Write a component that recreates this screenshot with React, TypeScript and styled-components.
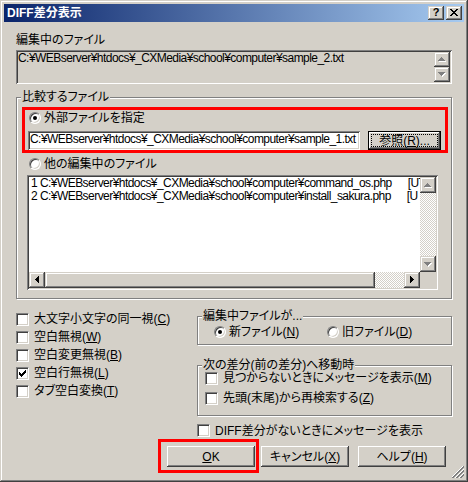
import React from 'react';
import styled, { createGlobalStyle, css } from 'styled-components';

const FACE = '#D4D0C8';
const SHADOW = '#808080';
const DARK = '#404040';
const WHITE = '#FFFFFF';
const RED = '#FF0000';

const GlobalStyle = createGlobalStyle`
  html, body { margin: 0; padding: 0; background: ${FACE}; }
  body {
    font-family: "Liberation Sans", "Noto Sans CJK JP", sans-serif;
    font-size: 12px;
    line-height: 14px;
    color: #000;
    font-feature-settings: "palt";
  }
  *, *::before, *::after { box-sizing: border-box; }
`;

const raisedFrame = css`
  box-shadow:
    inset -1px -1px 0 ${DARK},
    inset 1px 1px 0 ${FACE},
    inset -2px -2px 0 ${SHADOW},
    inset 2px 2px 0 ${WHITE};
`;

const raisedButton = css`
  box-shadow:
    inset -1px -1px 0 ${DARK},
    inset 1px 1px 0 ${WHITE},
    inset -2px -2px 0 ${SHADOW},
    inset 2px 2px 0 ${FACE};
`;

const sunken = css`
  box-shadow:
    inset 1px 1px 0 ${SHADOW},
    inset -1px -1px 0 ${WHITE},
    inset 2px 2px 0 ${DARK},
    inset -2px -2px 0 ${FACE};
`;

const dither = css`
  background-color: ${WHITE};
  background-image: conic-gradient(${FACE} 25%, transparent 0 50%, ${FACE} 0 75%, transparent 0);
  background-size: 2px 2px;
`;

const Window = styled.div`
  position: relative;
  width: 468px;
  height: 482px;
  padding: 4px;
  display: flex;
  flex-direction: column;
  background: ${FACE};
  ${raisedFrame}
`;

const TitleBar = styled.div`
  height: 18px;
  display: flex;
  align-items: center;
  padding: 0 2px;
  background: linear-gradient(to right, #0a246a, #a6caf0);
`;

const TitleText = styled.div`
  flex: 1;
  color: ${WHITE};
  font-weight: bold;
  font-size: 12px;
  line-height: 14px;
  padding-left: 1px;
  white-space: nowrap;
`;

const CaptionButtons = styled.div`
  display: flex;
  gap: 2px;
`;

const CaptionButton = styled.div`
  width: 16px;
  height: 14px;
  background: ${FACE};
  ${raisedFrame}
  display: flex;
  align-items: center;
  justify-content: center;
  font-weight: bold;
  font-size: 11px;
  line-height: 11px;
  padding-bottom: 1px;
`;

const Body = styled.div`
  flex: 1;
  display: flex;
  flex-direction: column;
  padding: 11px 12px 0 12px;
`;

const FieldLabel = styled.div`
  height: 14px;
  line-height: 14px;
  margin-bottom: 3px;
  white-space: nowrap;
`;

const ReadOnlyBox = styled.div`
  height: 34px;
  display: flex;
  padding: 2px;
  background: ${FACE};
  ${sunken}
`;

const PathText = styled.div`
  flex: 1;
  line-height: 13px;
  letter-spacing: -0.55px;
  white-space: nowrap;
  overflow: hidden;
`;

const MiniScroll = styled.div`
  width: 16px;
  display: flex;
  flex-direction: column;
`;

const ScrollButton = styled.div<{ $h?: number }>`
  width: 16px;
  height: ${(p) => p.$h ?? 16}px;
  flex: none;
  background: ${FACE};
  ${raisedFrame}
  display: flex;
  align-items: center;
  justify-content: center;
`;

const GroupBox = styled.div`
  position: relative;
  border: 1px solid ${SHADOW};
  box-shadow: inset 1px 1px 0 ${WHITE}, 1px 1px 0 ${WHITE};
`;

const Legend = styled.span`
  position: absolute;
  top: -7px;
  left: 4px;
  padding: 0 1px;
  background: ${FACE};
  line-height: 12px;
  white-space: nowrap;
`;

const CompareGroup = styled(GroupBox)`
  margin-top: 13px;
  padding: 9px 3px 8px 0;
  display: flex;
  flex-direction: column;
`;

const Highlight = styled.div<{ $pad?: string }>`
  border: 3px solid ${RED};
  padding: ${(p) => p.$pad ?? '0'};
`;

const SourceHighlight = styled(Highlight)`
  margin: 0 0 0 5px;
  display: flex;
  flex-direction: column;
  gap: 5px;
`;

const RadioRow = styled.label<{ $pl?: number; $mt?: number; $w?: number }>`
  display: flex;
  align-items: center;
  gap: 3px;
  height: 16px;
  padding-left: ${(p) => p.$pl ?? 0}px;
  margin-top: ${(p) => p.$mt ?? 0}px;
  width: ${(p) => (p.$w ? `${p.$w}px` : 'auto')};
  flex: none;
  white-space: nowrap;
  line-height: 14px;
`;

const RadioCircle = styled.span<{ $checked?: boolean }>`
  position: relative;
  flex: none;
  width: 12px;
  height: 12px;
  border-radius: 50%;
  background: ${WHITE};
  border: 1px solid;
  border-color: ${SHADOW} ${WHITE} ${WHITE} ${SHADOW};
  box-shadow: inset 1px 1px 0 ${DARK}, inset -1px -1px 0 ${FACE};
  ${(p) =>
    p.$checked &&
    css`
      &::after {
        content: '';
        position: absolute;
        left: 3px;
        top: 3px;
        width: 4px;
        height: 4px;
        border-radius: 50%;
        background: #000;
      }
    `}
`;

const InputRow = styled.div`
  display: flex;
  gap: 8px;
`;

const TextInput = styled.div`
  width: 332px;
  height: 19px;
  padding: 2px;
  background: ${WHITE};
  ${sunken}
  line-height: 13px;
  letter-spacing: -0.55px;
  white-space: nowrap;
  overflow: hidden;
`;

const PushButton = styled.div<{ $w?: number; $h?: number; $default?: boolean }>`
  width: ${(p) => p.$w ?? 88}px;
  height: ${(p) => p.$h ?? 21}px;
  flex: none;
  background: ${FACE};
  display: flex;
  align-items: center;
  justify-content: center;
  white-space: nowrap;
  line-height: 14px;
  ${(p) =>
    p.$default
      ? css`
          padding: 3px;
          box-shadow:
            inset 0 0 0 1px #000,
            inset -2px -2px 0 ${DARK},
            inset 2px 2px 0 ${WHITE},
            inset -3px -3px 0 ${SHADOW};
        `
      : raisedButton}
`;

const FocusRect = styled.span`
  flex: 1;
  align-self: stretch;
  border: 1px dotted #000;
  display: flex;
  align-items: center;
  justify-content: center;
  line-height: 12px;
`;

const ListBox = styled.div`
  margin: 3px 0 0 10px;
  width: 411px;
  height: 115px;
  padding: 2px;
  background: ${WHITE};
  ${sunken}
  display: grid;
  grid-template-columns: 1fr 16px;
  grid-template-rows: 1fr 16px;
`;

const ListContent = styled.div`
  overflow: hidden;
  padding-left: 2px;
`;

const ListRow = styled.div`
  display: flex;
  white-space: nowrap;
  line-height: 13px;
  letter-spacing: -0.55px;
`;

const RowCode = styled.span`
  margin-left: 16px;
`;

const VScroll = styled.div`
  display: flex;
  flex-direction: column;
`;

const HScroll = styled.div`
  display: flex;
`;

const Track = styled.div`
  flex: 1;
  ${dither}
`;

const Thumb = styled.div<{ $w: number }>`
  width: ${(p) => p.$w}px;
  flex: none;
  background: ${FACE};
  ${raisedFrame}
`;

const Corner = styled.div`
  background: ${FACE};
`;

const Lower = styled.div`
  display: flex;
`;

const OptionsColumn = styled.div`
  width: 181px;
  padding-top: 11px;
  display: flex;
  flex-direction: column;
`;

const SideColumn = styled.div`
  width: 255px;
  display: flex;
  flex-direction: column;
`;

const TargetGroup = styled(GroupBox)`
  margin-top: 17px;
  padding: 7px 0 4px 16px;
  display: flex;
`;

const MoveGroup = styled(GroupBox)`
  margin-top: 20px;
  padding: 2px 0 7px 7px;
  display: flex;
  flex-direction: column;
`;

const CheckRow = styled.label<{ $h?: number; $mt?: number }>`
  display: flex;
  align-items: center;
  gap: 5px;
  height: ${(p) => p.$h ?? 18}px;
  margin-top: ${(p) => p.$mt ?? 0}px;
  white-space: nowrap;
  line-height: 12px;
  flex: none;
`;

const CheckBox = styled.span`
  flex: none;
  width: 13px;
  height: 13px;
  background: ${WHITE};
  border: 1px solid;
  border-color: ${SHADOW} ${WHITE} ${WHITE} ${SHADOW};
  box-shadow: inset 1px 1px 0 ${DARK}, inset -1px -1px 0 ${FACE};
  display: flex;
  align-items: center;
  justify-content: center;
`;

const ButtonRow = styled.div`
  display: flex;
  justify-content: flex-end;
  align-items: flex-start;
  padding-right: 6px;
`;

const OkHighlight = styled(Highlight)`
  display: flex;
`;

const SideButton = styled(PushButton)<{ $ml: number }>`
  margin-left: ${(p) => p.$ml}px;
  margin-top: 7px;
`;

const Grip = styled.svg`
  position: absolute;
  right: 4px;
  bottom: 4px;
`;

const Mn = styled.span`
  text-decoration: underline;
  text-underline-offset: 1px;
`;

const ARROWS = {
  up: { w: 7, h: 4, d: 'M3 0h1v1h1v1h1v1h1v1H0V3h1V2h1V1h1z' },
  down: { w: 7, h: 4, d: 'M0 0h7v1H6v1H5v1H4v1H3V3H2V2H1V1H0z' },
  left: { w: 4, h: 7, d: 'M3 0h1v7H3V6H2V5H1V4H0V3h1V2h1V1h1z' },
  right: { w: 4, h: 7, d: 'M0 0h1v1h1v1h1v1h1v1H3v1H2v1H1v1H0z' },
} as const;

function Arrow({ dir, disabled }: { dir: keyof typeof ARROWS; disabled?: boolean }) {
  const a = ARROWS[dir];
  return (
    <svg width={a.w + 1} height={a.h + 1} shapeRendering="crispEdges" style={{ display: 'block' }}>
      {disabled && <path d={a.d} fill={WHITE} transform="translate(1 1)" />}
      <path d={a.d} fill={disabled ? SHADOW : '#000'} />
    </svg>
  );
}

function CheckMark() {
  return (
    <svg width="7" height="7" shapeRendering="crispEdges" style={{ display: 'block' }}>
      <path d="M0 2H1V3H2V4H3V3H4V2H5V1H6V0H7V3H6V4H5V5H4V6H3V7H2V6H1V5H0Z" fill="#000" />
    </svg>
  );
}

function CloseGlyph() {
  return (
    <svg width="8" height="7" shapeRendering="crispEdges" style={{ display: 'block' }}>
      <path
        d="M0 0h2v1H0z M6 0h2v1H6z M1 1h2v1H1z M5 1h2v1H5z M2 2h4v1H2z M3 3h2v1H3z M2 4h4v1H2z M1 5h2v1H1z M5 5h2v1H5z M0 6h2v1H0z M6 6h2v1H6z"
        fill="#000"
      />
    </svg>
  );
}

function GripGlyph() {
  const pixels: { x: number; y: number; c: string }[] = [];
  const lines: [number, string][] = [
    [10, WHITE], [11, SHADOW], [12, SHADOW],
    [14, WHITE], [15, SHADOW], [16, SHADOW],
    [18, WHITE], [19, SHADOW], [20, SHADOW],
  ];
  lines.forEach(([c, color]) => {
    for (let x = 0; x < 12; x++) {
      const y = c - x;
      if (y >= 0 && y < 12) pixels.push({ x, y, c: color });
    }
  });
  return (
    <Grip width="12" height="12" shapeRendering="crispEdges">
      {pixels.map((p, i) => (
        <rect key={i} x={p.x} y={p.y} width="1" height="1" fill={p.c} />
      ))}
    </Grip>
  );
}

function Radio({ checked }: { checked?: boolean }) {
  return <RadioCircle $checked={checked} />;
}

function Check({ checked }: { checked?: boolean }) {
  return <CheckBox>{checked && <CheckMark />}</CheckBox>;
}

function Label({ text, mn }: { text: string; mn?: string }) {
  return (
    <span>
      {text}
      {mn && (
        <>
          (<Mn>{mn}</Mn>)
        </>
      )}
    </span>
  );
}

const mainOptions = [
  { text: '大文字小文字の同一視', mn: 'C', checked: false },
  { text: '空白無視', mn: 'W', checked: false },
  { text: '空白変更無視', mn: 'B', checked: false },
  { text: '空白行無視', mn: 'L', checked: true },
  { text: 'タブ空白変換', mn: 'T', checked: false },
];

const openFiles = [
  { path: '1 C:¥WEBserver¥htdocs¥_CXMedia¥school¥computer¥command_os.php', code: '[UT' },
  { path: '2 C:¥WEBserver¥htdocs¥_CXMedia¥school¥computer¥install_sakura.php', code: '[U' },
];

export default function App() {
  return (
    <>
      <GlobalStyle />
      <Window>
        <TitleBar>
          <TitleText>DIFF差分表示</TitleText>
          <CaptionButtons>
            <CaptionButton>?</CaptionButton>
            <CaptionButton>
              <CloseGlyph />
            </CaptionButton>
          </CaptionButtons>
        </TitleBar>

        <Body>
          <FieldLabel>編集中のファイル</FieldLabel>
          <ReadOnlyBox>
            <PathText>C:¥WEBserver¥htdocs¥_CXMedia¥school¥computer¥sample_2.txt</PathText>
            <MiniScroll>
              <ScrollButton $h={15}>
                <Arrow dir="up" disabled />
              </ScrollButton>
              <ScrollButton $h={15}>
                <Arrow dir="down" disabled />
              </ScrollButton>
            </MiniScroll>
          </ReadOnlyBox>

          <CompareGroup>
            <Legend>比較するファイル</Legend>
            <SourceHighlight $pad="0 4px 0 3px">
              <RadioRow $pl={1}>
                <Radio checked />
                <span>外部ファイルを指定</span>
              </RadioRow>
              <InputRow>
                <TextInput>C:¥WEBserver¥htdocs¥_CXMedia¥school¥computer¥sample_1.txt</TextInput>
                <PushButton $w={73} $h={19} $default>
                  <FocusRect>
                    <Label text="参照" mn="R" />
                    ...
                  </FocusRect>
                </PushButton>
              </InputRow>
            </SourceHighlight>
            <RadioRow $pl={12} $mt={3}>
              <Radio />
              <span>他の編集中のファイル</span>
            </RadioRow>
            <ListBox>
              <ListContent>
                {openFiles.map((f) => (
                  <ListRow key={f.path}>
                    <span>{f.path}</span>
                    <RowCode>{f.code}</RowCode>
                  </ListRow>
                ))}
              </ListContent>
              <VScroll>
                <ScrollButton>
                  <Arrow dir="up" disabled />
                </ScrollButton>
                <Track />
                <ScrollButton>
                  <Arrow dir="down" disabled />
                </ScrollButton>
              </VScroll>
              <HScroll>
                <ScrollButton>
                  <Arrow dir="left" />
                </ScrollButton>
                <Thumb $w={330} />
                <Track />
                <ScrollButton>
                  <Arrow dir="right" />
                </ScrollButton>
              </HScroll>
              <Corner />
            </ListBox>
          </CompareGroup>

          <Lower>
            <OptionsColumn>
              {mainOptions.map((o) => (
                <CheckRow key={o.text}>
                  <Check checked={o.checked} />
                  <Label text={o.text} mn={o.mn} />
                </CheckRow>
              ))}
            </OptionsColumn>
            <SideColumn>
              <TargetGroup>
                <Legend>編集中ファイルが...</Legend>
                <RadioRow $w={113}>
                  <Radio checked />
                  <Label text="新ファイル" mn="N" />
                </RadioRow>
                <RadioRow>
                  <Radio />
                  <Label text="旧ファイル" mn="D" />
                </RadioRow>
              </TargetGroup>
              <MoveGroup>
                <Legend>次の差分(前の差分)へ移動時</Legend>
                <CheckRow $h={20}>
                  <Check />
                  <Label text="見つからないときにメッセージを表示" mn="M" />
                </CheckRow>
                <CheckRow $h={20}>
                  <Check />
                  <Label text="先頭(末尾)から再検索する" mn="Z" />
                </CheckRow>
              </MoveGroup>
              <CheckRow $h={17} $mt={6}>
                <Check />
                <span>DIFF差分がないときにメッセージを表示</span>
              </CheckRow>
            </SideColumn>
          </Lower>

          <ButtonRow>
            <OkHighlight $pad="4px 1px 3px 6px">
              <PushButton>
                <span>
                  <Mn>O</Mn>K
                </span>
              </PushButton>
            </OkHighlight>
            <SideButton $ml={2}>
              <Label text="キャンセル" mn="X" />
            </SideButton>
            <SideButton $ml={9}>
              <Label text="ヘルプ" mn="H" />
            </SideButton>
          </ButtonRow>
        </Body>
        <GripGlyph />
      </Window>
    </>
  );
}
